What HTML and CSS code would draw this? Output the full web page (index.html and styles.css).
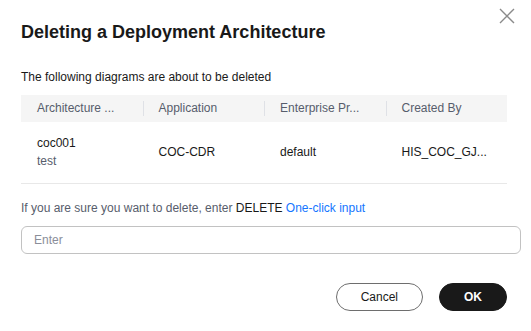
FILE: index.html
```html
<!DOCTYPE html>
<html lang="en">
<head>
  <meta charset="UTF-8" />
  <meta name="viewport" content="width=device-width, initial-scale=1.0">
  <title>Deleting a Deployment Architecture</title>
  <link rel="stylesheet" href="styles.css">
</head>
<body>

  <div class="dialog">
    <button class="close-btn" aria-label="Close">
      <svg width="16" height="16" viewBox="0 0 16 16">
        <path d="M1 1 L15 15 M15 1 L1 15" stroke="#8a8a8a" stroke-width="1.4" fill="none" />
      </svg>
    </button>

    <h2 class="title">Deleting a Deployment Architecture</h2>

    <p class="intro">The following diagrams are about to be deleted</p>

    <!-- Diagram table -->
    <div class="table">
      <div class="row head">
        <div class="cell">Architecture ...</div>
        <div class="cell">Application</div>
        <div class="cell">Enterprise Pr...</div>
        <div class="cell">Created By</div>
      </div>
      <div class="row">
        <div class="cell">
          <div>coc001</div>
          <div class="sub">test</div>
        </div>
        <div class="cell">COC-CDR</div>
        <div class="cell">default</div>
        <div class="cell">HIS_COC_GJ...</div>
      </div>
    </div>

    <p class="confirm">If you are sure you want to delete, enter <span class="keyword">DELETE</span> <a href="#" class="link">One-click input</a></p>

    <input type="text" class="confirm-input" placeholder="Enter">

    <div class="actions">
      <button class="btn btn-cancel">Cancel</button>
      <button class="btn btn-ok">OK</button>
    </div>
  </div>

</body>
</html>
```

FILE: styles.css
```css
body {
  margin: 0;
  font-family: "Liberation Sans", Arial, sans-serif;
  background: #fff;
  color: #191919;
}

.dialog {
  position: relative;
  padding: 20px 24px 20px 21px;
}

.close-btn {
  position: absolute;
  top: 8px;
  right: 16px;
  padding: 0;
  border: none;
  background: none;
  cursor: pointer;
  line-height: 0;
}

.title {
  margin: 0;
  font-size: 18px;
  line-height: 24px;
  font-weight: bold;
  color: #191919;
}

.intro {
  margin: 24px 0 0;
  font-size: 12px;
  line-height: 18px;
  color: #191919;
}

.table {
  margin-top: 9px;
  font-size: 12px;
  line-height: 18px;
}

.row {
  display: grid;
  grid-template-columns: repeat(4, 1fr);
  border-bottom: 1px solid #e8e8e8;
}

.row .cell {
  padding: 12px 16px 13px;
  display: flex;
  flex-direction: column;
  justify-content: center;
  white-space: nowrap;
}

.row.head {
  background: #f5f5f5;
  border-bottom: none;
}

.row.head .cell {
  position: relative;
  padding: 4px 16px 5px;
  color: #575d6c;
}

.row.head .cell + .cell::before {
  content: "";
  position: absolute;
  left: 0;
  top: 6px;
  bottom: 6px;
  border-left: 1px solid #dfe1e6;
}

.sub {
  color: #575d6c;
}

.confirm {
  margin: 15px 0 0;
  font-size: 12px;
  line-height: 18px;
  color: #575d6c;
}

.keyword {
  color: #191919;
}

.link {
  color: #1476ff;
  text-decoration: none;
}

.confirm-input {
  display: block;
  box-sizing: border-box;
  width: 500px;
  height: 28px;
  margin-top: 9px;
  padding: 0 12px;
  border: 1px solid #c2c2c2;
  border-radius: 6px;
  font-family: inherit;
  font-size: 12px;
  color: #191919;
  outline: none;
}

.confirm-input::placeholder {
  color: #8a8e99;
}

.actions {
  display: flex;
  justify-content: flex-end;
  gap: 16px;
  margin-top: 29px;
}

.btn {
  box-sizing: border-box;
  height: 28px;
  padding: 0 24px;
  border-radius: 14px;
  font-family: inherit;
  font-size: 12px;
  cursor: pointer;
}

.btn-cancel {
  background: #fff;
  border: 1px solid #6e6e6e;
  color: #191919;
}

.btn-ok {
  background: #191919;
  border: 1px solid #191919;
  color: #fff;
  font-weight: bold;
}
```
